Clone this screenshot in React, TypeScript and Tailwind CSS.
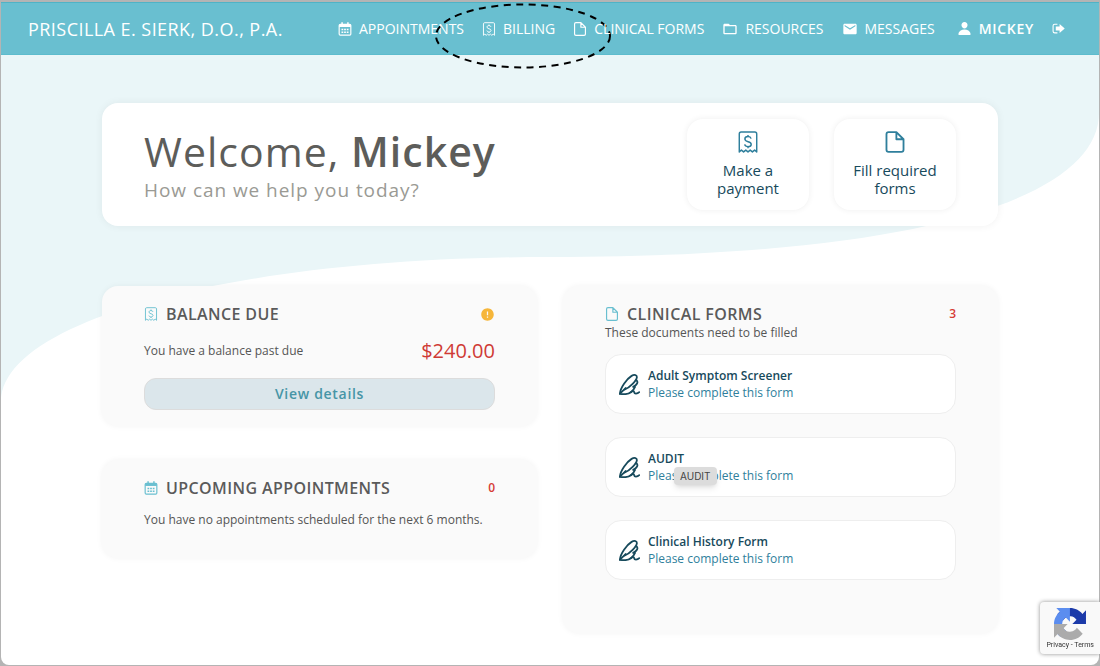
import type { ComponentType, ReactNode } from "react";
import { IoPerson } from "react-icons/io5";
import { MdEmail, MdError, MdFolderOpen } from "react-icons/md";

type IconType = ComponentType<{ className?: string }>;

type NavItem = {
  label: string;
  icon: IconType;
  iconClass: string;
  circled?: boolean;
};

function ReceiptIcon({ className }: { className?: string }) {
  return (
    <svg viewBox="0 0 24 24" fill="none" stroke="currentColor" strokeWidth="1.6" strokeLinejoin="round" className={className} aria-hidden="true">
      <path d="M2.500 22.800V3.200C2.500 2 3.300 1.200 4.500 1.200h15c1.200 0 2 .8 2 2v19.600l-2.300-2-2.400 2-2.400-2-2.400 2-2.400-2-2.400 2-2.400-2z" />
      <path d="M15.400 8.300c-.4-1.400-1.700-2.200-3.400-2.200-2 0-3.400 1-3.400 2.600 0 3.900 6.900 2 6.900 5.700 0 1.600-1.500 2.700-3.500 2.700-1.900 0-3.300-.9-3.600-2.400M12 4.300v1.800M12 17.100v1.800" />
    </svg>
  );
}

function FileIcon({ className }: { className?: string }) {
  return (
    <svg viewBox="0 0 24 24" fill="none" stroke="currentColor" strokeWidth="2" strokeLinejoin="round" className={className} aria-hidden="true">
      <path d="M13.500 1.200H5C3.600 1.200 2.700 2.100 2.700 3.500v17c0 1.400.9 2.300 2.300 2.300h14c1.400 0 2.300-.9 2.300-2.300V9zM13.500 1.200V9h7.800" />
    </svg>
  );
}

function CalendarIcon({ className }: { className?: string }) {
  return (
    <svg viewBox="0 0 24 24" fill="none" stroke="currentColor" className={className} aria-hidden="true">
      <rect x="2" y="4" width="20" height="18.500" rx="2" strokeWidth="2" />
      <path d="M2 6.500h20" strokeWidth="4" />
      <path d="M7 .5v5M17 .5v5" strokeWidth="2.500" />
      <path d="M6 13h3M10.500 13h3M15 13h3M6 17.500h3M10.500 17.500h3M15 17.500h3" strokeWidth="2.500" />
    </svg>
  );
}

function LogoutIcon({ className }: { className?: string }) {
  return (
    <svg viewBox="0 0 24 20" className={className} aria-hidden="true">
      <path d="M10 2H5C3.300 2 2 3.300 2 5v10c0 1.700 1.300 3 3 3h5" fill="none" stroke="currentColor" strokeWidth="2" />
      <path d="M14 1.500l9.500 8.500-9.500 8.500V13.500H7v-7h7z" fill="currentColor" />
    </svg>
  );
}

function SignIcon({ className }: { className?: string }) {
  return (
    <svg viewBox="0 0 20 20" fill="none" stroke="currentColor" strokeWidth="1.700" strokeLinecap="round" strokeLinejoin="round" className={className} aria-hidden="true">
      <path d="M.9 18.800C1 13.500 7.500 4.500 12 1.800c2.700-1.600 5.300-.9 5 1.400-.4 3.200-6.500 9.300-11.500 11.600" />
      <path d="M.9 18.800l5.400-5.400" />
      <path d="M16.800 6c1.600 1.800.6 4.300-3.300 6.200h1.800c-1.700 3.800-5.600 6.700-9.300 7-2 .2-3.800 0-5.100-.4" />
      <path d="M11.500 17.200c1.500-1.300 2.900-1 3 .3.1 1.500 2.800 1.600 4.800-.2" />
    </svg>
  );
}

const NAV_ITEMS: NavItem[] = [
  { label: "APPOINTMENTS", icon: CalendarIcon, iconClass: "size-[14px]" },
  { label: "BILLING", icon: ReceiptIcon, iconClass: "size-[14px]", circled: true },
  { label: "CLINICAL FORMS", icon: FileIcon, iconClass: "size-[14px]" },
  { label: "RESOURCES", icon: MdFolderOpen, iconClass: "size-4" },
  { label: "MESSAGES", icon: MdEmail, iconClass: "size-4" },
];

const FORMS = [
  { title: "Adult Symptom Screener" },
  { title: "AUDIT", tooltip: "AUDIT" },
  { title: "Clinical History Form" },
];

function Header() {
  return (
    <header className="relative z-10 flex h-[53px] items-center justify-between border-y border-t-[#4fb3c6] border-b-[#5dbccd] bg-[#69bfd0] pr-[34px] pl-[27px] text-white">
      <a href="#home" className="text-lg tracking-wide whitespace-nowrap">
        PRISCILLA E. SIERK, D.O., P.A.
      </a>
      <nav className="flex items-center gap-[18px] text-sm whitespace-nowrap">
        {NAV_ITEMS.map(({ label, icon: Icon, iconClass, circled }) => (
          <a key={label} href="#nav" className="relative flex items-center gap-[7px]">
            <Icon className={iconClass} />
            {label}
            {circled ? (
              <svg viewBox="0 0 178 66" className="pointer-events-none absolute -top-4 -left-12 h-[66px] w-[178px] max-w-none" aria-hidden="true">
                <ellipse cx="89" cy="33" rx="87" ry="31.500" fill="none" stroke="#000" strokeWidth="2" strokeDasharray="7 5.500" />
              </svg>
            ) : null}
          </a>
        ))}
        <a href="#profile" className="ml-1 flex items-center gap-[7px] font-semibold tracking-wider">
          <IoPerson className="size-[15px]" />
          MICKEY
        </a>
        <button type="button" aria-label="Log out">
          <LogoutIcon className="h-[11px] w-[13px]" />
        </button>
      </nav>
    </header>
  );
}

function QuickAction({ icon: Icon, children }: { icon: IconType; children: ReactNode }) {
  return (
    <button
      type="button"
      className="flex w-[122px] flex-col items-center gap-2 rounded-2xl bg-white px-3 pt-3 pb-[13px] text-[15px] leading-[18px] text-[#174a5c] shadow-[0_0_6px_rgba(0,0,0,0.07)]"
    >
      <Icon className="size-[22px] text-[#2f7f9c]" />
      <span>{children}</span>
    </button>
  );
}

function CardHeading({ icon: Icon, title, children }: { icon: IconType; title: string; children: ReactNode }) {
  return (
    <div className="flex h-5 items-center justify-between">
      <h2 className="flex items-center gap-2 text-base font-semibold tracking-wide text-[#5a5a5a]">
        <Icon className="size-[14px] text-[#69bfd0]" />
        {title}
      </h2>
      {children}
    </div>
  );
}

function Card({ className, children }: { className: string; children: ReactNode }) {
  return (
    <section className={`rounded-2xl bg-[#fafafa] px-[42px] pt-[18px] text-xs text-[#555] shadow-[0_0_6px_rgba(0,0,0,0.05)] ${className}`}>
      {children}
    </section>
  );
}

function FormRow({ title, tooltip }: { title: string; tooltip?: string }) {
  return (
    <li className="relative">
      <a href="#form" className="flex h-[60px] items-center gap-2 rounded-2xl border border-[#eee] bg-white px-[13px]">
        <SignIcon className="size-[21px] text-[#174a5c]" />
        <span className="flex flex-col leading-[17px]">
          <span className="font-semibold text-[#174a5c]">{title}</span>
          <span className="text-[#2f7f9c]">Please complete this form</span>
        </span>
      </a>
      {tooltip ? (
        <span role="tooltip" className="absolute top-[30px] left-[69px] rounded-sm bg-[#dcdcdc] px-[6px] font-[Inter,sans-serif] text-[10px] leading-[18px] text-[#444] shadow-md">
          {tooltip}
        </span>
      ) : null}
    </li>
  );
}

function RecaptchaBadge() {
  return (
    <aside className="fixed right-0 bottom-3 z-20 flex flex-col items-center rounded-l-sm bg-[#f9f9f9] px-[6px] pt-[6px] pb-[3px] shadow-[0_0_4px_#909090]">
      <svg viewBox="0 0 64 64" className="size-8" aria-hidden="true">
        <path
          fill="#1c3aa9"
          d="M64 31.955l-.033-1.37V4.687l-7.16 7.16C50.948 4.674 42.033.093 32.050.093c-10.400 0-19.622 4.960-25.458 12.640l11.736 11.860a15.550 15.550 0 0 1 4.754-5.334c2.050-1.600 4.952-2.906 8.968-2.906.485 0 .86.057 1.135.163 4.976.393 9.288 3.140 11.828 7.124l-8.307 8.307L64 31.953"
        />
        <path
          fill="#5b8def"
          d="M31.862.094l-1.370.033H4.594l7.160 7.160C4.580 13.147 0 22.060 0 32.046c0 10.400 4.960 19.622 12.640 25.458L24.500 45.768a15.550 15.550 0 0 1-5.334-4.754c-1.600-2.050-2.906-4.952-2.906-8.968 0-.485.057-.86.163-1.135.393-4.976 3.140-9.288 7.124-11.828l8.307 8.307L31.860.095"
        />
        <path
          fill="#ababab"
          d="M.001 32.045l.033 1.370v25.898l7.160-7.160c5.860 7.173 14.774 11.754 24.760 11.754 10.400 0 19.622-4.960 25.458-12.640l-11.736-11.860a15.550 15.550 0 0 1-4.754 5.334c-2.050 1.600-4.952 2.906-8.968 2.906-.485 0-.86-.057-1.135-.163-4.976-.393-9.288-3.140-11.828-7.124l8.307-8.307c-10.522.040-22.400.066-27.295-.005"
        />
      </svg>
      <p className="font-[Roboto,sans-serif] text-[7px] leading-[11px] text-[#333]">
        <a href="#privacy">Privacy</a> - <a href="#terms">Terms</a>
      </p>
    </aside>
  );
}

export default function App() {
  return (
    <div className="flex min-h-screen flex-col bg-[#b4b4b4] px-px pt-[2px] pb-[2px] font-['Open_Sans','Noto_Sans',sans-serif]">
      <div className="relative flex-1 overflow-hidden rounded-b-lg bg-white">
        <Header />
        <svg viewBox="0 0 1098 400" preserveAspectRatio="none" className="absolute inset-x-0 top-0 h-[400px] w-full" aria-hidden="true">
          <path fill="#eaf6f8" d="M0 0H1098V111C1098 193 929 255 549 255C239 255 0 317 0 400Z" />
        </svg>

        <main className="relative mx-auto mt-12 max-w-4xl pb-8">
          <section className="flex items-center justify-between rounded-2xl bg-white px-[42px] py-4 shadow-[0_0_8px_rgba(0,0,0,0.06)]">
            <div className="pt-1">
              <h1 className="text-[41px] leading-[46px] tracking-wide text-[#5d5d5a]">
                Welcome, <span className="font-semibold">Mickey</span>
              </h1>
              <p className="text-[19px] leading-8 tracking-wider text-[#9a9a94]">How can we help you today?</p>
            </div>
            <div className="flex gap-[25px]">
              <QuickAction icon={ReceiptIcon}>Make a payment</QuickAction>
              <QuickAction icon={FileIcon}>Fill required forms</QuickAction>
            </div>
          </section>

          <div className="mt-15 grid grid-cols-2 gap-[26px]">
            <div className="flex flex-col gap-[34px]">
              <Card className="pb-4">
                <CardHeading icon={ReceiptIcon} title="BALANCE DUE">
                  <MdError className="size-[15px] text-[#f6b63a]" />
                </CardHeading>
                <div className="mt-3 flex h-[30px] items-center justify-between">
                  <p>You have a balance past due</p>
                  <p className="text-xl text-[#cf3a35]">$240.00</p>
                </div>
                <button type="button" className="mt-3 h-8 w-full rounded-xl border border-[#dcdcdc] bg-[#dbe6eb] text-sm font-semibold tracking-wider text-[#4795a6]">
                  View details
                </button>
              </Card>

              <Card className="pb-7">
                <CardHeading icon={CalendarIcon} title="UPCOMING APPOINTMENTS">
                  <span className="font-semibold text-[#d63a35]">0</span>
                </CardHeading>
                <p className="mt-3 leading-5">You have no appointments scheduled for the next 6 months.</p>
              </Card>
            </div>

            <Card className="pb-[53px]">
              <CardHeading icon={FileIcon} title="CLINICAL FORMS">
                <span className="font-semibold text-[#d63a35]">3</span>
              </CardHeading>
              <p className="leading-[18px]">These documents need to be filled</p>
              <ul className="mt-3 flex flex-col gap-[23px]">
                {FORMS.map((form) => (
                  <FormRow key={form.title} title={form.title} tooltip={form.tooltip} />
                ))}
              </ul>
            </Card>
          </div>
        </main>
      </div>
      <RecaptchaBadge />
    </div>
  );
}
